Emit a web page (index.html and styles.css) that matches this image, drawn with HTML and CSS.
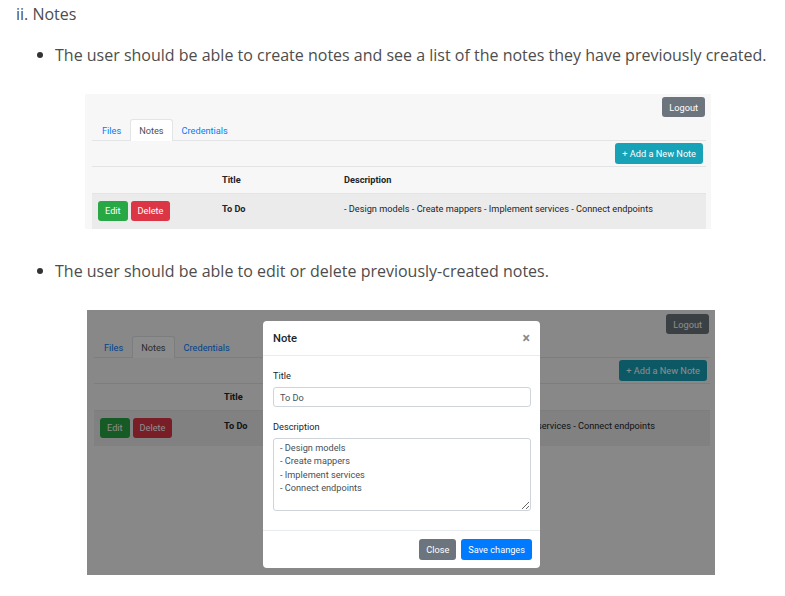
FILE: index.html
```html
<!DOCTYPE html>
<html lang="en">
<head>
<meta charset="utf-8">
<title>Notes</title>
<link rel="stylesheet" href="styles.css">
</head>
<body>
<p class="heading">ii. Notes</p>
<ul class="points">
  <li class="point">
    <div class="point-text">The user should be able to create notes and see a list of the notes they have previously created.</div>
    <div class="shot shot-a">
      <div class="shot-bar"><span class="btn btn-secondary">Logout</span></div>
      <div class="tabs">
        <span class="tab tab-link tab-first">Files</span>
        <span class="tab tab-active">Notes</span>
        <span class="tab tab-link">Credentials</span>
      </div>
      <div class="toolbar"><span class="btn btn-info">+ Add a New Note</span></div>
      <div class="table">
        <div class="thead">
          <div class="cell"></div>
          <div class="cell">Title</div>
          <div class="cell">Description</div>
        </div>
        <div class="trow">
          <div class="cell actions"><span class="btn btn-success">Edit</span><span class="btn btn-danger">Delete</span></div>
          <div class="cell strong">To Do</div>
          <div class="cell">- Design models - Create mappers - Implement services - Connect endpoints</div>
        </div>
      </div>
    </div>
  </li>
  <li class="point">
    <div class="point-text">The user should be able to edit or delete previously-created notes.</div>
    <div class="shot shot-b">
      <div class="shot-bar"><span class="btn btn-secondary">Logout</span></div>
      <div class="tabs">
        <span class="tab tab-link tab-first">Files</span>
        <span class="tab tab-active">Notes</span>
        <span class="tab tab-link">Credentials</span>
      </div>
      <div class="toolbar"><span class="btn btn-info">+ Add a New Note</span></div>
      <div class="table">
        <div class="thead">
          <div class="cell"></div>
          <div class="cell">Title</div>
          <div class="cell">Description</div>
        </div>
        <div class="trow">
          <div class="cell actions"><span class="btn btn-success">Edit</span><span class="btn btn-danger">Delete</span></div>
          <div class="cell strong">To Do</div>
          <div class="cell">- Design models - Create mappers - Implement services - Connect endpoints</div>
        </div>
      </div>
      <div class="backdrop"></div>
      <div class="modal">
        <div class="modal-header">
          <span class="modal-title">Note</span>
          <span class="modal-close">×</span>
        </div>
        <div class="modal-body">
          <div class="label">Title</div>
          <input class="field" type="text" value="To Do" readonly>
          <div class="label label-gap">Description</div>
          <textarea class="field area" readonly>- Design models
- Create mappers
- Implement services
- Connect endpoints</textarea>
        </div>
        <div class="modal-footer">
          <span class="btn btn-secondary">Close</span>
          <span class="btn btn-primary">Save changes</span>
        </div>
      </div>
    </div>
  </li>
</ul>
</body>
</html>
```
FILE: styles.css
```css
html, body {
  margin: 0;
  padding: 0;
  background: #ffffff;
}

body {
  font-family: "Open Sans", "DejaVu Sans", sans-serif;
  font-size: 16px;
  color: #4d4d4d;
}

.heading {
  margin: 0;
  padding: 2px 0 0 16px;
  line-height: 24px;
}

.points {
  list-style: none;
  margin: 17px 0 0;
  padding: 0;
}

.point + .point {
  margin-top: 30px;
}

.point-text {
  display: flex;
  align-items: center;
  padding-left: 37px;
  line-height: 24px;
}

.point-text::before {
  content: "";
  flex: none;
  width: 6px;
  height: 6px;
  border-radius: 50%;
  background: #333333;
  margin-right: 12px;
}

/* ---------- embedded app screenshot ---------- */
.shot {
  position: relative;
  box-sizing: border-box;
  background: #f7f7f8;
  font-family: Roboto, "Liberation Sans", sans-serif;
  font-size: 9.2px;
  color: #212529;
  overflow: hidden;
}

.shot-a {
  width: 626px;
  height: 135px;
  margin: 27px 0 0 85px;
  padding: 3px 5px 0 7px;
}

.shot-b {
  width: 628px;
  height: 265px;
  margin: 27px 0 0 87px;
  padding: 4px 5px 0 7px;
}

.shot-bar {
  display: flex;
  justify-content: flex-end;
  padding-right: 1px;
}

.btn {
  display: inline-flex;
  align-items: center;
  justify-content: center;
  box-sizing: border-box;
  height: 21px;
  padding: 0 7px;
  border-radius: 3px;
  color: #ffffff;
  white-space: nowrap;
}

.shot-bar .btn {
  height: 20px;
}

.btn-secondary { background: #6c757d; }
.btn-info { background: #17a2b8; }
.btn-success { background: #28a745; }
.btn-danger { background: #dc3545; }
.btn-primary { background: #007bff; }

.tabs {
  display: flex;
  align-items: flex-end;
  margin-top: 2px;
  height: 22px;
  box-sizing: border-box;
  border-bottom: 1px solid #e2e4e6;
}

.tab {
  display: flex;
  align-items: center;
  box-sizing: border-box;
  height: 22px;
  padding: 0 8px 1px;
  border: 1px solid transparent;
  border-bottom: 0;
  margin-bottom: -1px;
}

.tab-first {
  padding-left: 9px;
}

.tab-link {
  color: #007bff;
}

.tab-active {
  background: #ffffff;
  color: #495057;
  border-color: #e2e4e6;
  border-radius: 3px 3px 0 0;
}

.toolbar {
  display: flex;
  justify-content: flex-end;
  padding: 2px 3px 2px 0;
}

.table {
  border-top: 1px solid #e2e4e6;
}

.thead,
.trow {
  display: grid;
  grid-template-columns: 123px 122px 1fr;
}

.thead {
  height: 27px;
  box-sizing: border-box;
  border-bottom: 1px solid #e2e4e6;
  align-items: center;
  font-weight: 700;
}

.trow {
  height: 35px;
  background: #ebebec;
  align-items: start;
}

.cell {
  padding: 0 7px;
  line-height: 14px;
  white-space: nowrap;
}

.trow .cell {
  padding-top: 8px;
}

.trow .actions {
  display: flex;
  gap: 3px;
  padding: 7px 0 0 6px;
}

.trow .actions .btn {
  height: 20px;
}

.strong {
  font-weight: 700;
}

/* ---------- modal ---------- */
.backdrop {
  position: absolute;
  inset: 0;
  background: rgba(0, 0, 0, 0.45);
}

.modal {
  position: absolute;
  left: 176px;
  top: 11px;
  width: 277px;
  height: 247px;
  background: #ffffff;
  border-radius: 4px;
  display: flex;
  flex-direction: column;
  box-sizing: border-box;
}

.modal-header {
  height: 35px;
  box-sizing: border-box;
  display: flex;
  align-items: center;
  justify-content: space-between;
  padding: 0 10px 0 10px;
  border-bottom: 1px solid #e9ecef;
}

.modal-title {
  font-size: 11.2px;
  font-weight: 500;
  color: #212529;
}

.modal-close {
  font-size: 14px;
  font-weight: 700;
  color: #8a8a8a;
  line-height: 14px;
}

.modal-body {
  flex: 1;
  display: flex;
  flex-direction: column;
  align-items: stretch;
  padding: 13px 9px 0 10px;
}

.label {
  line-height: 14px;
  color: #212529;
}

.label-gap {
  margin-top: 13px;
}

.field {
  display: block;
  box-sizing: border-box;
  width: 100%;
  margin: 4px 0 0;
  height: 20px;
  padding: 0 6px;
  border: 1px solid #ced4da;
  border-radius: 3px;
  background: #ffffff;
  font-family: Roboto, "Liberation Sans", sans-serif;
  font-size: 9.2px;
  color: #495057;
  outline: none;
}

.area {
  height: 73px;
  padding: 2px 6px;
  line-height: 13.4px;
  resize: vertical;
  overflow: hidden;
}

.modal-footer {
  display: flex;
  justify-content: flex-end;
  gap: 5px;
  padding: 8px 8px 8px 0;
  border-top: 1px solid #e9ecef;
}
```
